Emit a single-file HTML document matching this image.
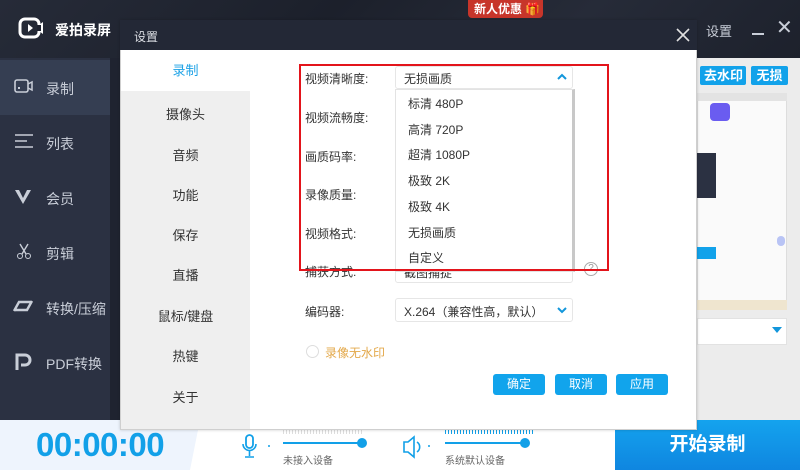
<!DOCTYPE html>
<html><head><meta charset="utf-8"><style>
*{margin:0;padding:0;box-sizing:border-box}
body{width:800px;height:470px;overflow:hidden;position:relative;font-family:"Liberation Sans","Noto Sans CJK SC",sans-serif;background:#1f2330;font-size:13px}
.a{position:absolute}
.side div{position:absolute;left:0;width:110px;height:55px;color:#c9ced8;font-size:14px}
.side span{position:absolute;left:46px;top:19px}
.menu div{position:absolute;left:0;width:129px;text-align:center;color:#333;font-size:13px}
.lbl{position:absolute;left:305px;color:#333;font-size:12px}
.opt{position:absolute;left:408px;color:#333;font-size:12px}
.btn{position:absolute;top:374px;width:52px;height:21px;background:#11a4ec;color:#fff;border-radius:3px;text-align:center;line-height:21px;font-size:12px}
</style></head><body>
<div class="a" style="left:0;top:0;width:800px;height:58px;background:linear-gradient(135deg,#262b38,#1c202b 40%,#262b38 70%,#1d212c)"></div>
<svg class="a" style="left:18px;top:17px" width="26" height="22" viewBox="0 0 26 22"><rect x="2" y="2" width="19" height="18" rx="5" fill="none" stroke="#fff" stroke-width="3"/><path d="M10 7l5 4-5 4z" fill="#fff"/><path d="M21 8l4-3v12l-4-3z" fill="#fff"/><rect x="19" y="8" width="4" height="6" fill="#1f2330"/></svg>
<div class="a" style="left:55px;top:20px;color:#fff;font-size:14px;font-weight:bold">爱拍录屏</div>
<div class="a" style="left:468px;top:0;width:75px;height:18px;background:#c7352a;border-radius:0 0 4px 4px;color:#fff;font-size:12px;font-weight:bold;padding-left:6px;line-height:18px">新人优惠 <span style="color:#f7b04a">🎁</span></div>
<div class="a" style="left:706px;top:21px;color:#c9ced8;font-size:13px">设置</div>
<div class="a" style="left:752px;top:33px;width:12px;height:2px;background:#c9ced8"></div>
<div class="a" style="left:776px;top:18px;color:#c9ced8;font-size:20px;line-height:20px">✕</div>
<div class="a side" style="left:0;top:58px;width:110px;height:362px;background:#2b3142">
<div style="top:2px;background:#353e52"><svg class="a" style="left:14px;top:19px" width="20" height="16"><rect x="1" y="1" width="13" height="12" rx="2" fill="none" stroke="#c9ced8" stroke-width="1.6"/><path d="M14 5l4-2v8l-4-2" fill="none" stroke="#c9ced8" stroke-width="1.5"/><rect x="4" y="8" width="2" height="2" fill="#c9ced8"/></svg><span>录制</span></div>
<div style="top:57px"><svg class="a" style="left:14px;top:18px" width="20" height="16"><path d="M1 2h18M1 8h12M1 14h18" stroke="#c9ced8" stroke-width="1.6"/></svg><span>列表</span></div>
<div style="top:112px"><svg class="a" style="left:14px;top:19px" width="20" height="16"><path d="M1 1l8 14 8-14h-4l-4 8-4-8z" fill="#c9ced8"/></svg><span>会员</span></div>
<div style="top:167px"><svg class="a" style="left:14px;top:17px" width="20" height="18"><path d="M6 2l6 10M14 2l-6 10" stroke="#c9ced8" stroke-width="1.4"/><circle cx="6" cy="14" r="2.5" fill="none" stroke="#c9ced8"/><circle cx="14" cy="14" r="2.5" fill="none" stroke="#c9ced8"/></svg><span>剪辑</span></div>
<div style="top:222px"><svg class="a" style="left:12px;top:19px" width="22" height="14"><path d="M2 12l5-9h12M20 2l-5 9H3" fill="none" stroke="#c9ced8" stroke-width="2.4"/></svg><span>转换/压缩</span></div>
<div style="top:277px"><svg class="a" style="left:14px;top:17px" width="20" height="20"><path d="M3 18V3h8a5 5 0 010 10H7" fill="none" stroke="#c9ced8" stroke-width="3"/></svg><span>PDF转换</span></div>
</div>
<div class="a" style="left:697px;top:58px;width:103px;height:362px;background:#ececec"></div>
<div class="a" style="left:700px;top:66px;width:46px;height:19px;background:#12a2ea;color:#fff;font-weight:bold;font-size:13px;line-height:19px;text-align:right;padding-right:3px;border-radius:2px">去水印</div>
<div class="a" style="left:751px;top:66px;width:37px;height:19px;background:#12a2ea;color:#fff;font-weight:bold;font-size:13px;line-height:19px;text-align:center;border-radius:2px">无损</div>
<div class="a" style="left:697px;top:93px;width:90px;height:210px;background:#fafafa;border:1px solid #ddd"></div>
<div class="a" style="left:697px;top:93px;width:90px;height:8px;background:#e3e3e3"></div>
<div class="a" style="left:710px;top:103px;width:20px;height:18px;background:#6a5cf0;border-radius:4px"></div>
<div class="a" style="left:697px;top:153px;width:19px;height:45px;background:#2b3142"></div>
<div class="a" style="left:697px;top:247px;width:19px;height:12px;background:#12a2ea"></div>
<div class="a" style="left:777px;top:236px;width:8px;height:10px;background:#b9c4f5;border-radius:4px"></div>
<div class="a" style="left:697px;top:300px;width:90px;height:10px;background:#efe5cf"></div>
<div class="a" style="left:697px;top:318px;width:90px;height:27px;background:#fff;border:1px solid #e2e2e2"></div>
<div class="a" style="left:772px;top:327px;width:0;height:0;border-left:5px solid transparent;border-right:5px solid transparent;border-top:6px solid #1296db"></div>
<div class="a" style="left:0;top:420px;width:800px;height:50px;background:#fff"></div>
<div class="a" style="left:0;top:420px;width:200px;height:50px;background:#eef4fd;clip-path:polygon(0 0,100% 0,95% 100%,0 100%)"></div>
<div class="a" style="left:36px;top:426px;color:#12a0e8;font-size:33px;font-weight:bold;letter-spacing:-0.5px">00:00:00</div>
<svg class="a" style="left:242px;top:434px" width="30" height="26"><rect x="4" y="1" width="7" height="13" rx="3.5" fill="none" stroke="#12a0e8" stroke-width="1.8"/><path d="M1 10a6.5 6.5 0 0013 0M7.5 17v5M3 23h9" fill="none" stroke="#12a0e8" stroke-width="1.6"/><circle cx="27" cy="12" r="1" fill="#12a0e8"/></svg>
<div class="a" style="left:283px;top:427px;width:80px;height:7px;background:repeating-linear-gradient(90deg,#ddd 0 1px,transparent 1px 3px)"></div>
<div class="a" style="left:283px;top:442px;width:80px;height:2px;background:#12a0e8"></div>
<div class="a" style="left:357px;top:438px;width:10px;height:10px;border-radius:50%;background:#12a0e8"></div>
<div class="a" style="left:283px;top:452px;color:#666;font-size:10px">未接入设备</div>
<svg class="a" style="left:402px;top:434px" width="30" height="26"><path d="M2 8h4l6-5v20l-6-5H2z" fill="none" stroke="#12a0e8" stroke-width="1.6"/><path d="M15 8a6 6 0 010 10" fill="none" stroke="#12a0e8" stroke-width="1.6"/><circle cx="27" cy="12" r="1" fill="#12a0e8"/></svg>
<div class="a" style="left:445px;top:427px;width:90px;height:7px;background:repeating-linear-gradient(90deg,#12a0e8 0 1px,transparent 1px 3px);"></div>
<div class="a" style="left:445px;top:442px;width:80px;height:2px;background:#12a0e8"></div>
<div class="a" style="left:520px;top:438px;width:10px;height:10px;border-radius:50%;background:#12a0e8"></div>
<div class="a" style="left:445px;top:452px;color:#666;font-size:10px">系统默认设备</div>
<div class="a" style="left:615px;top:420px;width:185px;height:50px;background:linear-gradient(180deg,#14a3ee,#0f86e0);color:#fff;font-size:19px;font-weight:bold;text-align:center;line-height:50px">开始录制</div>
<div class="a" style="left:120px;top:20px;width:577px;height:410px;background:#fff;border:1px solid #cfcfcf;box-shadow:0 0 3px rgba(0,0,0,.2)"></div>
<div class="a" style="left:120px;top:20px;width:577px;height:30px;background:#232836"></div>
<div class="a" style="left:134px;top:28px;color:#dcdfe5;font-size:12px">设置</div>
<svg class="a" style="left:676px;top:28px" width="14" height="14"><path d="M1 1l12 12M13 1L1 13" stroke="#e0e0e0" stroke-width="1.6"/></svg>
<div class="a menu" style="left:121px;top:50px;width:129px;height:379px;background:#efefef">
<div style="top:0;height:41px;background:#fff;color:#1ba1e6;line-height:41px">录制</div>
<div style="top:54px">摄像头</div><div style="top:95px">音频</div><div style="top:135px">功能</div><div style="top:175px">保存</div><div style="top:215px">直播</div><div style="top:256px">鼠标/键盘</div><div style="top:296px">热键</div><div style="top:337px">关于</div>
</div>
<div class="lbl" style="top:70px">视频清晰度:</div>
<div class="lbl" style="top:109px">视频流畅度:</div>
<div class="lbl" style="top:148px">画质码率:</div>
<div class="lbl" style="top:186px">录像质量:</div>
<div class="lbl" style="top:225px">视频格式:</div>
<div class="lbl" style="top:263px">捕获方式:</div>
<div class="lbl" style="top:303px">编码器:</div>
<div class="a" style="left:395px;top:66px;width:178px;height:23px;border:1px solid #e6e6e6;border-radius:3px;background:#fff"></div>
<div class="a" style="left:404px;top:70px;font-size:12px;color:#333">无损画质</div>
<svg class="a" style="left:557px;top:73px" width="10" height="7"><path d="M1 6l4-4 4 4" fill="none" stroke="#1296db" stroke-width="2"/></svg>
<div class="a" style="left:395px;top:260px;width:178px;height:23px;border:1px solid #e6e6e6;border-radius:3px;background:#fff"></div>
<div class="a" style="left:404px;top:264px;font-size:12px;color:#333">截图捕捉</div>
<div class="a" style="left:584px;top:262px;width:14px;height:14px;border:1px solid #aaa;border-radius:50%;font-size:10px;color:#999;text-align:center;line-height:12px">?</div>
<div class="a" style="left:395px;top:298px;width:178px;height:24px;border:1px solid #e6e6e6;border-radius:3px;background:#fff"></div>
<div class="a" style="left:404px;top:303px;font-size:12px;color:#333">X.264（兼容性高，默认）</div>
<svg class="a" style="left:557px;top:307px" width="10" height="7"><path d="M1 1l4 4 4-4" fill="none" stroke="#1296db" stroke-width="2"/></svg>
<div class="a" style="left:395px;top:89px;width:180px;height:183px;background:#fff;border:1px solid #e3e3e3;border-right:3px solid #c8c8c8"></div>
<div class="opt" style="top:95px">标清 480P</div>
<div class="opt" style="top:121px">高清 720P</div>
<div class="opt" style="top:146px">超清 1080P</div>
<div class="opt" style="top:172px">极致 2K</div>
<div class="opt" style="top:198px">极致 4K</div>
<div class="opt" style="top:224px">无损画质</div>
<div class="opt" style="top:249px">自定义</div>
<div class="a" style="left:299px;top:64px;width:310px;height:207px;border:2px solid #e3141b"></div>
<div class="a" style="left:306px;top:345px;width:13px;height:13px;border:1px solid #ddd;border-radius:50%"></div>
<div class="a" style="left:325px;top:344px;color:#e3a84a;font-size:12px">录像无水印</div>
<div class="btn" style="left:493px">确定</div>
<div class="btn" style="left:555px">取消</div>
<div class="btn" style="left:616px">应用</div>
</body></html>
